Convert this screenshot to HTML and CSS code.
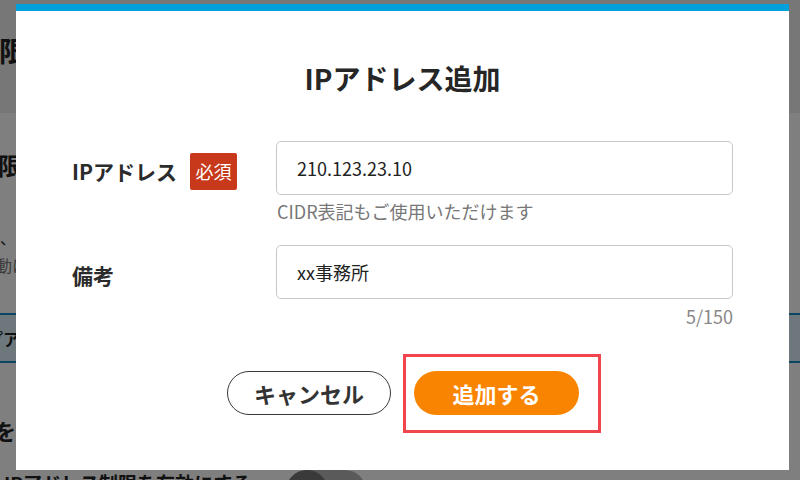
FILE: index.html
```html
<!DOCTYPE html>
<html lang="ja">
<head>
<meta charset="utf-8">
<title>IPアドレス追加</title>
<link rel="stylesheet" href="styles.css">
</head>
<body>
<div class="page">
  <header class="page-header">
    <h1 class="page-title">限</h1>
  </header>
  <main class="page-body">
    <h2 class="section-title">限</h2>
    <p class="section-text">、ア</p>
    <p class="section-note">動に</p>
    <div class="tab-row"><span class="tab-label">プア</span></div>
    <h3 class="sub-title">を有</h3>
    <div class="switch-row">
      <span class="switch-text">IPアドレス制限を有効にする</span>
      <span class="switch"><span class="knob"></span></span>
    </div>
  </main>
</div>

<div class="backdrop"></div>

<div class="modal" role="dialog" aria-labelledby="modal-title">
  <h2 class="modal-title" id="modal-title">IPアドレス追加</h2>
  <form class="form">
    <div class="form-row">
      <div class="form-label">
        <span class="label-text">IPアドレス</span>
        <span class="badge">必須</span>
      </div>
      <div class="form-field">
        <input class="input" type="text" value="210.123.23.10">
        <p class="hint">CIDR表記もご使用いただけます</p>
      </div>
    </div>
    <div class="form-row">
      <div class="form-label">
        <span class="label-text">備考</span>
      </div>
      <div class="form-field">
        <input class="input" type="text" value="xx事務所">
        <p class="counter">5/150</p>
      </div>
    </div>
    <div class="actions">
      <button type="button" class="btn btn-cancel">キャンセル</button>
      <button type="button" class="btn btn-primary">追加する</button>
      <span class="highlight" aria-hidden="true"></span>
    </div>
  </form>
</div>
</body>
</html>
```

FILE: styles.css
```css
* { box-sizing: border-box; }

html, body {
  margin: 0;
  padding: 0;
}

body {
  width: 800px;
  height: 480px;
  overflow: hidden;
  position: relative;
  background: #ffffff;
  font-family: "Noto Sans CJK JP", "Noto Sans", sans-serif;
  color: #222222;
}

/* ---------- underlying page ---------- */
.page {
  width: 800px;
  height: 480px;
  display: flex;
  flex-direction: column;
  overflow: hidden;
}

.page-header {
  flex: 0 0 113px;
  height: 113px;
  background: #eeeeee;
  padding-top: 30px;
}

.page-title {
  margin: 0 0 0 -1px;
  font-size: 28px;
  line-height: 40px;
  font-weight: 700;
  white-space: nowrap;
  color: #222;
}

.page-body {
  flex: 1 1 auto;
  min-height: 0;
  display: flex;
  flex-direction: column;
}

.page-body > * {
  flex-shrink: 0;
}

.section-title {
  margin: 35px 0 0 -2px;
  font-size: 24px;
  line-height: 34px;
  font-weight: 700;
  white-space: nowrap;
}

.section-text {
  margin: 44px 0 0 0;
  font-size: 16px;
  line-height: 22px;
  white-space: nowrap;
}

.section-note {
  margin: 6px 0 0 -4px;
  font-size: 16px;
  line-height: 22px;
  color: #777;
  white-space: nowrap;
}

.tab-row {
  margin-top: 37px;
  height: 50px;
  background: #dceff8;
  border-top: 2px solid #1b8cc4;
  border-bottom: 2px solid #1b8cc4;
  display: flex;
  align-items: center;
}

.tab-label {
  margin-left: -14px;
  font-size: 17px;
  font-weight: 700;
  white-space: nowrap;
}

.sub-title {
  margin: 52px 0 0 -6px;
  font-size: 22px;
  line-height: 30px;
  font-weight: 700;
  white-space: nowrap;
}

.switch-row {
  margin-top: 25px;
  display: flex;
  align-items: flex-start;
  padding-left: 4px;
}

.switch-text {
  font-size: 19px;
  line-height: 26px;
  font-weight: 700;
  white-space: nowrap;
}

.switch {
  width: 80px;
  height: 42px;
  border-radius: 21px;
  background: #b4b4b4;
  display: flex;
  margin-left: 35px;
}

.knob {
  width: 42px;
  height: 42px;
  border-radius: 50%;
  background: #747474;
}

/* ---------- backdrop ---------- */
.backdrop {
  position: absolute;
  inset: 0;
  background: rgba(0, 0, 0, 0.5);
}

/* ---------- modal ---------- */
.modal {
  position: absolute;
  left: 16px;
  top: 4px;
  width: 773px;
  height: 466px;
  background: #ffffff;
  border-top: 7px solid #00a0dc;
  padding: 0 56px;
}

.modal-title {
  margin: 47px 0 0;
  text-align: center;
  font-size: 28px;
  line-height: 40px;
  font-weight: 700;
  color: #262626;
}

.form {
  margin-top: 43px;
}

.form-row {
  display: grid;
  grid-template-columns: 204px 1fr;
}

.form-row + .form-row {
  margin-top: 22px;
}

.form-label {
  height: 54px;
  padding-top: 6px;
  display: flex;
  align-items: center;
  gap: 13px;
}

.label-text {
  font-size: 21px;
  font-weight: 700;
  color: #2b2b2b;
}

.badge {
  display: inline-flex;
  align-items: center;
  justify-content: center;
  width: 47px;
  height: 37px;
  background: #c8391c;
  color: #ffffff;
  font-size: 18px;
  border-radius: 2px;
}

.form-field {
  display: flex;
  flex-direction: column;
}

.input {
  width: 457px;
  height: 54px;
  border: 1px solid #c8c8c8;
  border-radius: 5px;
  padding: 0 20px;
  font-family: "Noto Sans CJK JP", "Noto Sans", sans-serif;
  font-size: 18px;
  color: #222222;
  background: #ffffff;
  outline: none;
}

.hint {
  margin: 4px 0 0 1px;
  font-size: 18px;
  line-height: 24px;
  color: #777777;
}

.counter {
  width: 457px;
  margin: 5px 0 0;
  text-align: right;
  font-size: 18px;
  line-height: 24px;
  color: #888888;
}

.actions {
  position: relative;
  margin-top: 43px;
  display: flex;
  justify-content: center;
  gap: 23px;
  padding-left: 1px;
}

.btn {
  height: 44px;
  border-radius: 22px;
  font-family: "Noto Sans CJK JP", "Noto Sans", sans-serif;
  font-size: 22px;
  font-weight: 700;
  padding: 0;
  cursor: pointer;
}

.btn-cancel {
  width: 164px;
  background: #ffffff;
  border: 1.5px solid #3a3a3a;
  color: #333333;
}

.btn-primary {
  width: 165px;
  background: #f98400;
  border: none;
  color: #ffffff;
}

.highlight {
  position: absolute;
  left: 331px;
  top: -17px;
  width: 198px;
  height: 79px;
  border: 3px solid #f2444c;
  pointer-events: none;
}
```
